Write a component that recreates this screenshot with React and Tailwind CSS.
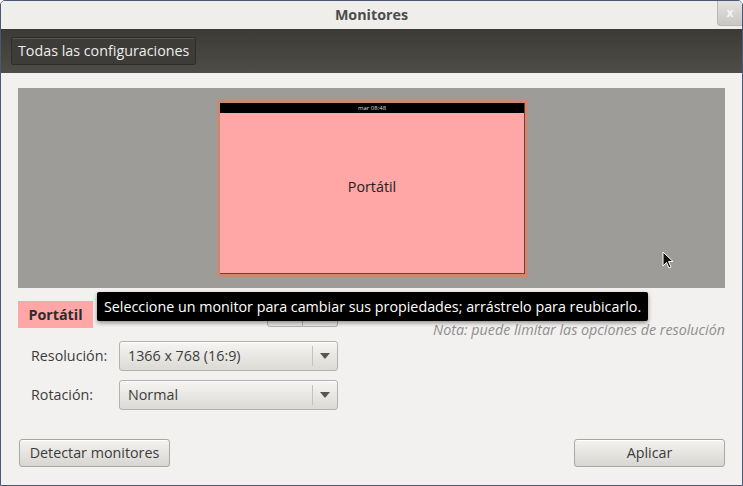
import React from 'react'

const font = { fontFamily: '"Open Sans", "DejaVu Sans", sans-serif' }

function Combo({ value }) {
  return (
    <div className="w-[219px] h-[30px] rounded-[3px] border border-[#b3b1ac] bg-gradient-to-b from-[#f6f5f3] to-[#dcdad5] flex items-center shadow-[inset_0_1px_0_#fff]">
      <span className="flex-1 pl-[8px] text-[14.3px] text-[#3c3c3c]">{value}</span>
      <div className="w-px h-[20px] bg-[#c4c2bd]" />
      <div className="w-[24px] flex justify-center">
        <svg width="10" height="6" viewBox="0 0 10 6"><path d="M0 0 L10 0 L5 6 Z" fill="#555" /></svg>
      </div>
    </div>
  )
}

function Button({ children, className = '' }) {
  return (
    <div className={`h-[28px] rounded-[3px] border border-[#a9a7a2] bg-gradient-to-b from-[#f4f3f1] to-[#d8d6d1] flex items-center justify-center text-[14.3px] text-[#3c3c3c] shadow-[inset_0_1px_0_#fff] ${className}`}>
      {children}
    </div>
  )
}

export default function App() {
  return (
    <div className="w-[743px] h-[486px] border border-[#4a5873] rounded-t-[5px] bg-[#f2f1f0] flex flex-col overflow-hidden relative" style={font}>

      {/* Title bar */}
      <div className="h-[28px] bg-[#efeeeb] relative flex items-center justify-center">
        <span className="text-[14.3px] font-bold text-[#4c4c4c]">Monitores</span>
        <div className="absolute right-0 top-0 w-[25px] h-[25px] rounded-bl-[4px] bg-gradient-to-b from-[#e4e3e0] to-[#c8c7c3] border-l border-b border-[#b9b8b4] flex items-center justify-center text-[12px] font-bold text-[#f5f5f5]">
          x
        </div>
      </div>

      {/* Toolbar */}
      <div className="h-[44px] bg-gradient-to-b from-[#3b3a36] to-[#4f4d47] flex items-center pl-[10px]">
        <div className="h-[28px] px-[6px] rounded-[2px] border border-[#2e2d2a] bg-[#3d3c38] shadow-[inset_0_1px_0_#55534e] flex items-center text-[14.3px] text-[#eeeeec]">
          Todas las configuraciones
        </div>
      </div>

      {/* Body */}
      <div className="flex-1 px-[17px] pt-[15px] relative">
        <div className="h-[200px] bg-[#9d9c99] flex items-center justify-center">
          <div className="w-[311px] h-[177px] ml-[2px] mt-[1px] bg-[#c98a74] p-[3px] flex">
            <div className="flex-1 flex flex-col bg-[#ffa6a6] border-r border-b border-[#6b3f3f]">
              <div className="h-[10px] bg-black flex items-center justify-center text-[6px] leading-none text-[#ddd]">mar 08:48</div>
              <div className="flex-1 flex items-center justify-center text-[14.3px] text-[#222] pb-[12px]">Portátil</div>
            </div>
          </div>
        </div>

        {/* Output name row */}
        <div className="mt-[13px] h-[27px] flex">
          <div className="w-[75px] h-[27px] bg-[#ffa6a6] flex items-center justify-center text-[14.3px] font-bold text-[#2c2c2c]">Portátil</div>
          <div className="ml-[174px] mt-[5px] flex h-[21px]">
            <div className="w-[36px] border border-[#b3b1ac] rounded-l-[3px] bg-[#e8e7e4]" />
            <div className="w-[35px] border border-l-0 border-[#b3b1ac] rounded-r-[3px] bg-[#e8e7e4]" />
          </div>
        </div>

        <div className="text-right -mt-[8px] text-[14.3px] leading-[20px] italic text-[#8f8f8f]">
          Nota: puede limitar las opciones de resolución
        </div>

        <div className="mt-[1px] flex flex-col gap-[9px]">
          <div className="flex items-center">
            <span className="w-[101px] pl-[13px] text-[14.3px] text-[#3c3c3c]">Resolución:</span>
            <Combo value="1366 x 768 (16:9)" />
          </div>
          <div className="flex items-center">
            <span className="w-[101px] pl-[13px] text-[14.3px] text-[#3c3c3c]">Rotación:</span>
            <Combo value="Normal" />
          </div>
        </div>

        <div className="mt-[29px] flex justify-between pl-[1px]">
          <Button className="w-[151px]">Detectar monitores</Button>
          <Button className="w-[151px]">Aplicar</Button>
        </div>

        {/* Tooltip */}
        <div className="absolute left-[96px] top-[219px] h-[29px] px-[7px] bg-black rounded-[2px] shadow-[0_2px_4px_rgba(0,0,0,0.4)] flex items-center text-[14.3px] text-white whitespace-nowrap">
          Seleccione un monitor para cambiar sus propiedades; arrástrelo para reubicarlo.
        </div>

        {/* Cursor */}
        <svg className="absolute left-[661px] top-[178px]" width="13" height="19" viewBox="0 0 13 19">
          <path d="M1 1 L1 15 L4.5 11.5 L7 17 L9 16 L6.5 10.5 L11 10.5 Z" fill="#111" stroke="#fff" strokeWidth="1" />
        </svg>
      </div>
    </div>
  )
}
